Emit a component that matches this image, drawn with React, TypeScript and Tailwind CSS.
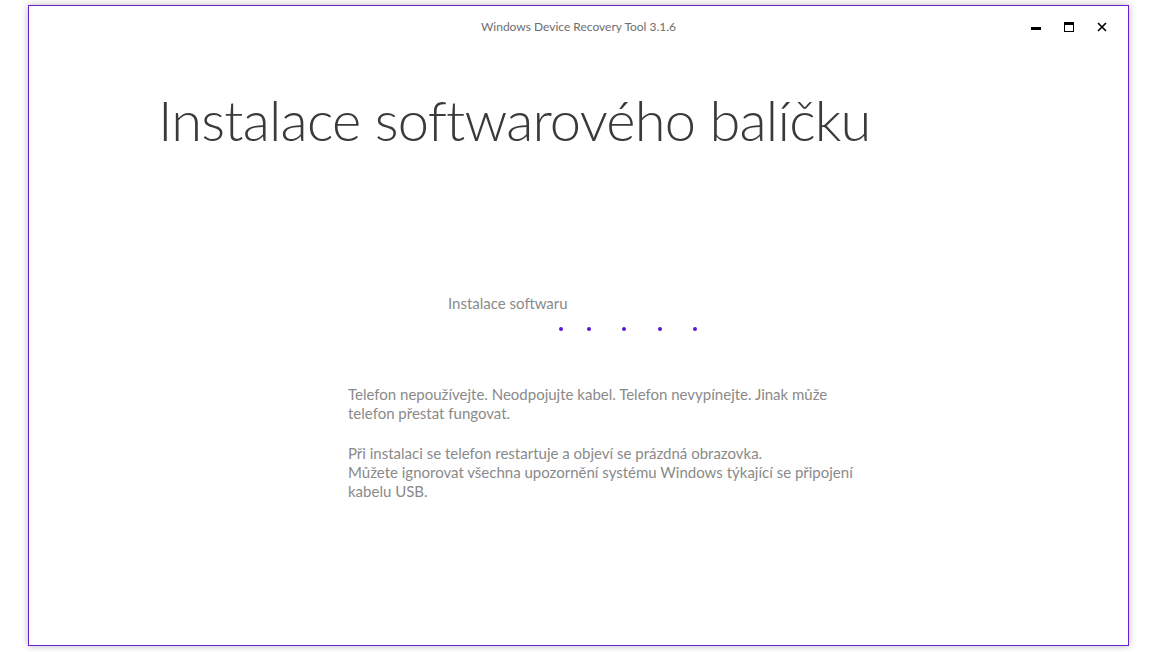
import React from 'react';

const dotOffsets = ['ml-[530px]', 'ml-[24px]', 'ml-[31px]', 'ml-[32px]', 'ml-[31px]'];

export default function App() {
  return (
    <div className="h-[652px] w-full bg-white pl-[28px] pt-[5px] font-['Lato',sans-serif]">
      <div className="flex h-[641px] w-[1101px] flex-col border border-[#6a1fd0] bg-white shadow-[0_0_7px_rgba(0,0,0,0.28)]">
        {/* title bar */}
        <div className="grid h-[42px] grid-cols-[1fr_auto_1fr] items-center">
          <div />
          <span className="text-[12px] text-[#6e6e6e]">Windows Device Recovery Tool 3.1.6</span>
          <div className="flex justify-end pr-[10px]">
            <button className="flex h-[30px] w-[33px] items-center justify-center">
              <span className="mt-[3px] block h-[3px] w-[10px] bg-black" />
            </button>
            <button className="flex h-[30px] w-[33px] items-center justify-center">
              <span className="block h-[10px] w-[10px] border border-t-[3px] border-black" />
            </button>
            <button className="flex h-[30px] w-[33px] items-center justify-center">
              <svg width="10" height="10" viewBox="0 0 10 10">
                <path d="M1 1L9 9M9 1L1 9" stroke="#000" strokeWidth="1.6" />
              </svg>
            </button>
          </div>
        </div>

        {/* heading */}
        <h1 className="ml-[129px] mt-[44px] whitespace-nowrap text-[56px] font-light leading-none tracking-[-0.8px] text-[#3a3a3a]">
          Instalace softwarového balíčku
        </h1>

        {/* progress */}
        <div className="ml-[419px] mt-[146px] text-[15px] leading-[19px] text-[#8a8a8a]">Instalace softwaru</div>
        <div className="mt-[14px] flex items-center">
          {dotOffsets.map((m, i) => (
            <span key={i} className={`${m} block h-[4px] w-[4px] rounded-full bg-[#5a17dc]`} />
          ))}
        </div>

        {/* info */}
        <div className="ml-[319px] mt-[54px] whitespace-nowrap text-[15px] leading-[19px] text-[#8a8a8a]">
          <p>
            Telefon nepoužívejte. Neodpojujte kabel. Telefon nevypínejte. Jinak může
            <br />
            telefon přestat fungovat.
          </p>
          <p className="mt-[21px]">
            Při instalaci se telefon restartuje a objeví se prázdná obrazovka.
            <br />
            Můžete ignorovat všechna upozornění systému Windows týkající se připojení
            <br />
            kabelu USB.
          </p>
        </div>
      </div>
    </div>
  );
}
